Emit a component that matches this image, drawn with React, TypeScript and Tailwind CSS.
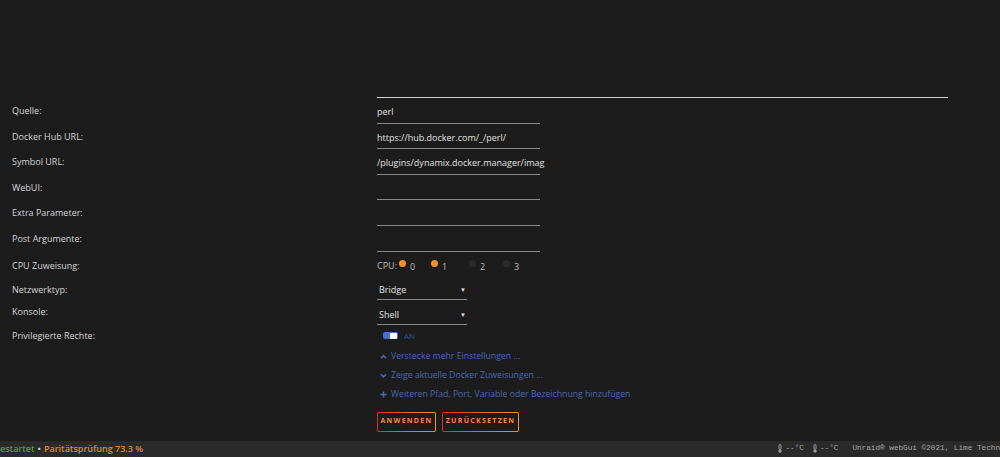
import React from "react";

const labels = [
  "Quelle:",
  "Docker Hub URL:",
  "Symbol URL:",
  "WebUI:",
  "Extra Parameter:",
  "Post Argumente:",
];
const values = [
  "perl",
  "https://hub.docker.com/_/perl/",
  "/plugins/dynamix.docker.manager/imag",
  "",
  "",
  "",
];

const cpus = [
  { n: "0", on: true, w: "w-[32px]" },
  { n: "1", on: true, w: "w-[38px]" },
  { n: "2", on: false, w: "w-[34px]" },
  { n: "3", on: false, w: "w-[20px]" },
];

function Label({ children }: { children: React.ReactNode }) {
  return <div className="pl-3 text-[9px] text-[#d6d6d6]">{children}</div>;
}

function Thermo() {
  return (
    <svg width="6" height="9" viewBox="0 0 6 9" className="inline-block mr-[2px]">
      <rect x="2" y="0.5" width="2" height="5" rx="1" fill="none" stroke="#9a9a9a" strokeWidth="1" />
      <circle cx="3" cy="7" r="1.7" fill="#9a9a9a" />
    </svg>
  );
}

export default function App() {
  return (
    <div
      className="w-[1000px] h-[457px] bg-[#1c1c1c] flex flex-col overflow-hidden"
      style={{ fontFamily: '"Open Sans", "Liberation Sans", sans-serif' }}
    >
      <div className="h-[441px] pt-[97px] flex flex-col">
        <div className="grid grid-cols-[377px_571px]">
          <div />
          <div className="h-px bg-[#cfcfcf]" />
        </div>

        {labels.map((l, i) => (
          <div key={l} className="grid grid-cols-[377px_1fr] h-[25.6px] items-center">
            <Label>{l}</Label>
            <div className="w-[163px] h-full border-b border-[#8a8a8a] flex items-end pb-[4px]">
              <span className="text-[9px] text-[#e2e2e2] whitespace-nowrap">{values[i]}</span>
            </div>
          </div>
        ))}

        <div className="grid grid-cols-[377px_1fr] h-[28px] items-center">
          <Label>CPU Zuweisung:</Label>
          <div className="flex items-center text-[9px] text-[#bdbdbd]">
            <span className="mr-[2px]">CPU:</span>
            {cpus.map((c) => (
              <span key={c.n} className={`flex items-center ${c.w}`}>
                <span
                  className={`w-[7px] h-[7px] rounded-full -mt-[5px] mr-[4px] ${
                    c.on ? "bg-[#f5902e]" : "bg-[#2c2c2c]"
                  }`}
                />
                <span className="pt-[3px]">{c.n}</span>
              </span>
            ))}
          </div>
        </div>

        <div className="grid grid-cols-[377px_1fr] h-[20px] items-center">
          <Label>Netzwerktyp:</Label>
          <div className="w-[90px] h-full border-b border-[#8a8a8a] flex items-end justify-between pb-[2px] pl-[2px] pr-[1px]">
            <span className="text-[9px] text-[#e2e2e2]">Bridge</span>
            <span className="text-[6px] text-[#e2e2e2] pb-[2px]">▼</span>
          </div>
        </div>

        <div className="grid grid-cols-[377px_1fr] h-[25px] items-center">
          <Label>Konsole:</Label>
          <div className="w-[90px] h-full border-b border-[#8a8a8a] flex items-end justify-between pb-[2px] pl-[2px] pr-[1px]">
            <span className="text-[9px] text-[#e2e2e2]">Shell</span>
            <span className="text-[6px] text-[#e2e2e2] pb-[2px]">▼</span>
          </div>
        </div>

        <div className="grid grid-cols-[377px_1fr] h-[22px] items-center">
          <Label>Privilegierte Rechte:</Label>
          <div className="flex items-center pl-[6px]">
            <span className="w-[15px] h-[7px] rounded-[2px] bg-[#4a6ec8] flex justify-end items-center pr-[1px]">
              <span className="w-[7px] h-[6px] rounded-[1px] bg-white" />
            </span>
            <span className="ml-[6px] text-[8px] text-[#2e5d9e]">AN</span>
          </div>
        </div>

        {[
          { icon: "up", text: "Verstecke mehr Einstellungen ..." },
          { icon: "down", text: "Zeige aktuelle Docker Zuweisungen ..." },
          { icon: "plus", text: "Weiteren Pfad, Port, Variable oder Bezeichnung hinzufügen" },
        ].map((r) => (
          <div key={r.text} className="grid grid-cols-[377px_1fr] h-[19px] items-center">
            <div />
            <div className="flex items-center pl-[3px] text-[8.7px] text-[#4b69b0]">
              <svg width="7" height="7" viewBox="0 0 8 8" className="mr-[4px]">
                {r.icon === "up" && (
                  <path d="M1 6 L4 3 L7 6" fill="none" stroke="#4b69b0" strokeWidth="1.8" />
                )}
                {r.icon === "down" && (
                  <path d="M1 2.5 L4 5.5 L7 2.5" fill="none" stroke="#4b69b0" strokeWidth="1.8" />
                )}
                {r.icon === "plus" && (
                  <path d="M4 0.5 V7.5 M0.5 4 H7.5" fill="none" stroke="#4b69b0" strokeWidth="1.8" />
                )}
              </svg>
              <span>{r.text}</span>
            </div>
          </div>
        ))}

        <div className="grid grid-cols-[377px_1fr] mt-[8px]">
          <div />
          <div className="flex gap-[6px]">
            {[
              { t: "ANWENDEN", w: "w-[59px]" },
              { t: "ZURÜCKSETZEN", w: "w-[77px]" },
            ].map((b) => (
              <div
                key={b.t}
                className={`${b.w} h-[20px] p-px rounded-[2px] bg-gradient-to-r from-[#e22828] to-[#ff8c2f]`}
              >
                <div className="w-full h-full rounded-[1px] bg-[#1c1c1c] flex items-center justify-center">
                  <span className="text-[7px] font-bold tracking-[1.3px] text-[#f4893a]">{b.t}</span>
                </div>
              </div>
            ))}
          </div>
        </div>
      </div>

      <div className="h-[16px] bg-[#2a2a2a] flex items-center justify-between text-[9px] whitespace-nowrap">
        <div className="font-semibold">
          <span className="text-[#5f9b2c]">estartet</span>
          <span className="text-[#d0d0d0] mx-[3px]">•</span>
          <span className="text-[#e08a25]">Paritätsprüfung 73.3 %</span>
        </div>
        <div
          className="flex items-center text-[7.7px] text-[#a8a8a8]"
          style={{ fontFamily: '"Liberation Mono", "DejaVu Sans Mono", monospace' }}
        >
          <span className="flex items-center mr-[8px]">
            <Thermo />--°C
          </span>
          <span className="flex items-center mr-[14px]">
            <Thermo />--°C
          </span>
          <span>Unraid® webGui ©2021, Lime Techn</span>
        </div>
      </div>
    </div>
  );
}
